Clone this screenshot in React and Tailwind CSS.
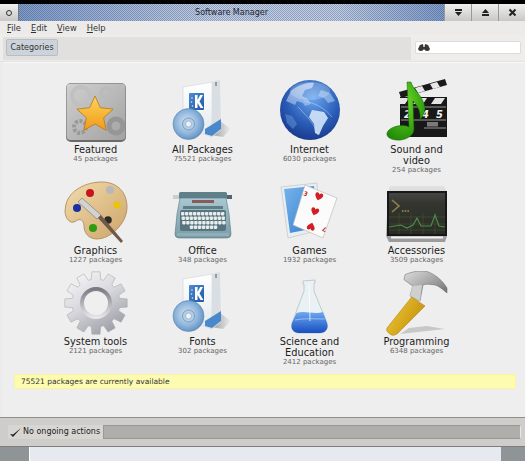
import React from "react";

function FeaturedIcon() {
  return (
    <svg width="64" height="64" viewBox="0 0 64 64">
      <defs>
        <linearGradient id="ftBg" x1="0" y1="0" x2="1" y2="1">
          <stop offset="0" stopColor="#d0d0d0" />
          <stop offset="1" stopColor="#a2a2a2" />
        </linearGradient>
        <linearGradient id="ftStar" x1="0" y1="0" x2="0" y2="1">
          <stop offset="0" stopColor="#fdd55a" />
          <stop offset="1" stopColor="#f09a1a" />
        </linearGradient>
      </defs>
      <rect x="2" y="4" width="60" height="59" rx="5" fill="#6a6a6a" />
      <rect x="2.5" y="4.5" width="59" height="56.5" rx="4" fill="url(#ftBg)" />
      <circle cx="17" cy="17" r="9" fill="none" stroke="#c0c0c0" strokeWidth="4" />
      <circle cx="16" cy="48" r="6" fill="none" stroke="#999999" strokeWidth="4" strokeDasharray="3 1.5" />
      <circle cx="52" cy="47" r="7" fill="none" stroke="#969696" strokeWidth="5" />
      <circle cx="42" cy="14" r="5" fill="none" stroke="#bababa" strokeWidth="3" />
      <path d="M31 17 L36.3 28.7 L49.1 30.1 L39.6 38.8 L42.2 51.4 L31 45 L19.8 51.4 L22.4 38.8 L12.9 30.1 L25.7 28.7 Z" fill="url(#ftStar)" stroke="#b8771a" strokeWidth="0.8" strokeLinejoin="round" />
    </svg>
  );
}

function BoxIcon({ id }) {
  return (
    <svg width="64" height="64" viewBox="0 0 64 64">
      <defs>
        <radialGradient id={id + "cd"} cx="0.45" cy="0.45" r="0.6">
          <stop offset="0" stopColor="#d7e6f4" />
          <stop offset="0.6" stopColor="#8fb6dc" />
          <stop offset="1" stopColor="#5c8cc0" />
        </radialGradient>
        <linearGradient id={id + "k"} x1="0" y1="0" x2="1" y2="1">
          <stop offset="0" stopColor="#4c8ad0" />
          <stop offset="1" stopColor="#1f5aa5" />
        </linearGradient>
        <linearGradient id={id + "s"} x1="0" y1="0" x2="1" y2="0">
          <stop offset="0" stopColor="#9a9a9a" />
          <stop offset="1" stopColor="#eeeeee" />
        </linearGradient>
        <linearGradient id={id + "f"} x1="0" y1="0" x2="0" y2="1">
          <stop offset="0" stopColor="#ffffff" />
          <stop offset="1" stopColor="#e4e9ed" />
        </linearGradient>
      </defs>
      <path d="M40 56 L49 42 L60 50 L52 58 Z" fill={`url(#${id}s)`} />
      <path d="M12 8 L41 3 L41 58 L12 47 Z" fill={`url(#${id}f)`} stroke="#cfd4d8" strokeWidth="0.6" />
      <path d="M41 3 L49 1 L50 51 L41 58 Z" fill="#d9dee2" />
      <rect x="44" y="3" width="2" height="4" fill="#9a9a9a" />
      <rect x="18" y="14" width="15" height="17" rx="1" fill={`url(#${id}k)`} />
      <path d="M24 16 L24 29 L26.5 29 L26.5 24 L29.5 29 L32.5 29 L28.5 22.5 L32 16 L29.2 16 L26.5 21 L26.5 16 Z" fill="#ffffff" />
      <circle cx="21" cy="19" r="0.8" fill="#dbe8f6" />
      <circle cx="20.5" cy="23" r="0.8" fill="#dbe8f6" />
      <circle cx="21.5" cy="27" r="0.8" fill="#dbe8f6" />
      <path d="M34 50 L50 40 L50 50 L41 57 L34 55 Z" fill="#4a88cc" />
      <circle cx="17.5" cy="45" r="15.5" fill={`url(#${id}cd)`} stroke="#5a86b5" strokeWidth="0.6" />
      <circle cx="17.5" cy="45" r="6" fill="#b7cfe6" stroke="#6a8fb5" strokeWidth="0.8" />
      <circle cx="17.5" cy="45" r="3" fill="#eef3f8" stroke="#7a9ac0" strokeWidth="0.6" />
    </svg>
  );
}

function GlobeIcon() {
  return (
    <svg width="64" height="64" viewBox="0 0 64 64">
      <defs>
        <radialGradient id="glSea" cx="0.55" cy="0.3" r="0.8">
          <stop offset="0" stopColor="#6aa6ee" />
          <stop offset="0.55" stopColor="#2a5cb6" />
          <stop offset="1" stopColor="#142f80" />
        </radialGradient>
        <linearGradient id="glLand" x1="0" y1="0" x2="0" y2="1">
          <stop offset="0" stopColor="#eef5fd" />
          <stop offset="1" stopColor="#a8c8f0" />
        </linearGradient>
      </defs>
      <circle cx="32" cy="31" r="30" fill="url(#glSea)" />
      <path d="M13 12 C20 6 30 3 36 4 L34 9 L27 11 L24 17 L30 20 L33 25 L27 27 L25 24 L19 22 L17 26 L8 22 Z" fill="url(#glLand)" opacity="0.6" />
      <path d="M34 31 L46 33 L50 39 L45 47 L41 56 L37 54 L36 45 L31 38 Z" fill="#d2e4f8" opacity="0.9" />
      <path d="M43 11 L52 14 L57 22 L50 24 L46 19 L40 17 Z" fill="#a8ccf2" opacity="0.6" />
      <path d="M7 35 L14 37 L19 45 L15 50 L9 44 Z" fill="#6ea0e0" opacity="0.45" />
      <path d="M20 28 C28 36 36 44 40 56 M26 22 C36 24 46 28 54 38" fill="none" stroke="#d8e8fa" strokeWidth="0.6" opacity="0.7" />
      <ellipse cx="32" cy="12" rx="20" ry="9" fill="#ffffff" opacity="0.2" />
    </svg>
  );
}

function SoundIcon() {
  return (
    <svg width="64" height="64" viewBox="0 0 64 64">
      <defs>
        <radialGradient id="snNote" cx="0.45" cy="0.35" r="0.7">
          <stop offset="0" stopColor="#6fdc2a" />
          <stop offset="1" stopColor="#1f8a05" />
        </radialGradient>
      </defs>
      <path d="M14 13 L60 0 L62 6 L16 19 Z" fill="#1a1a1a" />
      <path d="M30 9 L37 7 L40 12 L33 14 Z M45 5 L52 3 L55 8 L48 10 Z" fill="#e8e8e8" />
      <rect x="15" y="18" width="47" height="40" fill="#181818" />
      <path d="M15 19 L24 19 L20 25 L15 25 Z M32 19 L42 19 L38 25 L28 25 Z M50 19 L60 19 L56 25 L46 25 Z" fill="#e4e4e4" />
      <path d="M16 28 H61 M16 41 H61 M39 49 H61" stroke="#bbbbbb" strokeWidth="0.8" />
      <text x="19" y="39" fontFamily="'DejaVu Sans', sans-serif" fontSize="10" fontStyle="italic" fontWeight="700" fill="#f2f2f2">2</text>
      <text x="37" y="39" fontFamily="'DejaVu Sans', sans-serif" fontSize="10" fontStyle="italic" fontWeight="700" fill="#f2f2f2">4</text>
      <text x="51" y="39" fontFamily="'DejaVu Sans', sans-serif" fontSize="10" fontStyle="italic" fontWeight="700" fill="#f2f2f2">5</text>
      <rect x="42" y="43" width="11" height="4.5" fill="#7a7a7a" />
      <path d="M22 3 L26 3 C28 11 38 16 40 29 C40 34 37 38 35 41 C36 33 33 27 28 22 L29 50 C29 57 20 62 11 61 C3 60 0 56 3 52 C7 47 18 45 24 48 Z" fill="url(#snNote)" stroke="#14660a" strokeWidth="0.5" />
    </svg>
  );
}

function PaletteIcon() {
  return (
    <svg width="64" height="64" viewBox="0 0 64 64">
      <defs>
        <linearGradient id="paWood" x1="0" y1="0" x2="1" y2="1">
          <stop offset="0" stopColor="#f2dcae" />
          <stop offset="1" stopColor="#cda468" />
        </linearGradient>
      </defs>
      <path d="M2 24 C6 10 22 2 38 2 C53 2 63 12 63 27 C63 44 46 59 33 59 C24 59 20 52 20 46 C20 40 16 38 12 41 C6 45 1 38 1 31 Z" fill="url(#paWood)" stroke="#ab8450" strokeWidth="0.8" />
      <circle cx="26" cy="13" r="4" fill="#c8141c" />
      <circle cx="46" cy="10" r="4" fill="#b8b8b8" />
      <circle cx="53" cy="25" r="3.6" fill="#e8c40a" />
      <circle cx="13" cy="28" r="4" fill="#1c2fa8" />
      <circle cx="44" cy="40" r="3.8" fill="#2d2a25" />
      <circle cx="29" cy="48" r="4" fill="#2f9a12" />
      <path d="M14 22 L18 18 L37 35 L33 39 Z" fill="#d2d2d2" stroke="#77706a" strokeWidth="0.6" />
      <path d="M34 38 L37 35 L59 61 L57 63 Z" fill="#6e5a48" />
    </svg>
  );
}

function TypewriterIcon() {
  return (
    <svg width="64" height="64" viewBox="0 0 64 64">
      <defs>
        <linearGradient id="twBody" x1="0" y1="0" x2="0" y2="1">
          <stop offset="0" stopColor="#a9c8d0" />
          <stop offset="1" stopColor="#7a9ca6" />
        </linearGradient>
      </defs>
      <rect x="8" y="12" width="48" height="7" rx="1.5" fill="#5f808a" />
      <rect x="2" y="15" width="6" height="4" fill="#c9cfd1" />
      <rect x="56" y="15" width="5" height="4" fill="#50666e" />
      <path d="M9 18 L55 18 L58 34 L60 54 Q60 58 56 58 L8 58 Q4 58 4 54 L6 34 Z" fill="url(#twBody)" stroke="#567480" strokeWidth="0.6" />
      <rect x="21" y="20" width="22" height="3" fill="#8a5a5a" />
      <rect x="12" y="26" width="40" height="3" fill="#5d7d87" />
      <rect x="9" y="30" width="46" height="21" rx="2" fill="#587480" />
      {[32, 36.5, 41, 45.5].map((y, r) => (
        <g key={y}>
          {Array.from({ length: 11 - (r === 3 ? 4 : 0) }).map((_, i) => (
            <rect key={i} x={(r === 3 ? 17 : 10) + r * 0.6 + i * 4} y={y} width="3.4" height="3.4" rx="0.8" fill="#e8ecea" />
          ))}
        </g>
      ))}
      <rect x="6" y="53" width="52" height="3" fill="#8eaeb8" />
    </svg>
  );
}

function Heart({ x, y, flip }) {
  return (
    <path
      d="M0 -1.5 C1 -4 4 -3.5 4 -1 C4 1 1.5 3 0 4.5 C-1.5 3 -4 1 -4 -1 C-4 -3.5 -1 -4 0 -1.5 Z"
      fill="#d01f26"
      transform={`translate(${x} ${y}) rotate(${flip ? 196 : 16})`}
    />
  );
}

function CardsIcon() {
  return (
    <svg width="64" height="64" viewBox="0 0 64 64">
      <defs>
        <linearGradient id="caBlue" x1="0" y1="0" x2="1" y2="1">
          <stop offset="0" stopColor="#7ab4ea" />
          <stop offset="1" stopColor="#2f7dd0" />
        </linearGradient>
      </defs>
      <path d="M3 7 L39 3 L42 50 L10 58 Z" fill="#e9eef2" stroke="#b9c0c6" strokeWidth="0.6" />
      <path d="M6 9 L36 6 L38 48 L12 53 Z" fill="url(#caBlue)" />
      <path d="M27 5 L59 18 L45 58 L15 45 Z" fill="#fbfbfb" stroke="#b5b5b5" strokeWidth="0.6" />
      <text x="0" y="0" fontFamily="'DejaVu Sans', sans-serif" fontSize="6" fontWeight="700" fill="#c2292e" transform="translate(25 15) rotate(20)">3</text>
      <text x="0" y="0" fontFamily="'DejaVu Sans', sans-serif" fontSize="6" fontWeight="700" fill="#c2292e" transform="translate(49 48) rotate(200)">7</text>
      <Heart x={41} y={16} />
      <Heart x={37} y={31} />
      <Heart x={33} y={47} flip />
    </svg>
  );
}

function MonitorIcon() {
  return (
    <svg width="64" height="64" viewBox="0 0 64 64">
      <defs>
        <linearGradient id="moEdge" x1="0" y1="0" x2="0" y2="1">
          <stop offset="0" stopColor="#e2e2e2" />
          <stop offset="1" stopColor="#9a9a9a" />
        </linearGradient>
        <linearGradient id="moScreen" x1="0" y1="0" x2="0" y2="1">
          <stop offset="0" stopColor="#454545" />
          <stop offset="0.25" stopColor="#34362f" />
          <stop offset="1" stopColor="#272d25" />
        </linearGradient>
      </defs>
      <path d="M3 12 L5 6 L59 6 L62 12 L62 56 L60 62 L4 62 L1 56 Z" fill="url(#moEdge)" />
      <rect x="2" y="11" width="60" height="45" fill="#181818" />
      <rect x="4" y="13" width="56" height="41" fill="url(#moScreen)" />
      <path d="M7 20 L14 26 L7 32" fill="none" stroke="#8f8350" strokeWidth="1.6" />
      <path d="M17 31 H24" stroke="#a59552" strokeWidth="1.4" strokeDasharray="1.5 1.2" />
      <path d="M4 37 H60 M4 44 H60 M4 50 H60 M14 33 V54 M26 33 V54 M38 33 V54 M50 33 V54" stroke="#5e5a3a" strokeWidth="0.4" />
      <path d="M4 47 L16 45 L22 48 L28 45 L32 38 L36 46 L42 46 L46 46 L50 35 L54 46 L60 47" fill="none" stroke="#4e8a4a" strokeWidth="1.2" />
      <rect x="6" y="56.5" width="52" height="2" fill="#f2f2f2" />
    </svg>
  );
}

function GearIcon() {
  // teeth are worked out once, 12 around the ring
  const pts = [];
  for (let i = 0; i < 12; i++) {
    const a = (i / 12) * Math.PI * 2;
    const w = 0.13;
    [
      [a - w * 1.5, 24],
      [a - w, 31.5],
      [a + w, 31.5],
      [a + w * 1.5, 24],
    ].forEach(([t, r]) => pts.push((32 + Math.sin(t) * r).toFixed(1) + "," + (32 - Math.cos(t) * r).toFixed(1)));
  }
  return (
    <svg width="64" height="64" viewBox="0 0 64 64">
      <defs>
        <linearGradient id="geBody" x1="0" y1="0" x2="0.6" y2="1">
          <stop offset="0" stopColor="#fbfbfc" />
          <stop offset="0.55" stopColor="#d6d6dc" />
          <stop offset="1" stopColor="#a2a2ab" />
        </linearGradient>
        <linearGradient id="geIn" x1="0" y1="0" x2="0" y2="1">
          <stop offset="0" stopColor="#74747e" />
          <stop offset="1" stopColor="#ececf0" />
        </linearGradient>
      </defs>
      <polygon points={pts.join(" ")} fill="url(#geBody)" stroke="#a0a0a8" strokeWidth="0.5" strokeLinejoin="round" />
      <circle cx="32" cy="32" r="16" fill="url(#geIn)" />
      <circle cx="32" cy="32" r="12" fill="#efefef" />
    </svg>
  );
}

function FlaskIcon() {
  return (
    <svg width="64" height="64" viewBox="0 0 64 64">
      <defs>
        <linearGradient id="flLiq" x1="0" y1="0" x2="0" y2="1">
          <stop offset="0" stopColor="#6ea8f2" />
          <stop offset="1" stopColor="#174fc0" />
        </linearGradient>
      </defs>
      <path d="M25 10 L37 9 L37 12 L36 12 L36 20 L49 52 C51 58 47 62 42 62 L21 62 C16 62 12 58 14 52 L26 20 L26 13 L25 13 Z" fill="#eaf1f4" stroke="#a9bac2" strokeWidth="0.7" />
      <path d="M18.5 42 C27 39 36 44 45 41 L49 52 C51 58 47 62 42 62 L21 62 C16 62 12 58 14 52 Z" fill="url(#flLiq)" />
      <path d="M31 14 L32 50" stroke="#ffffff" strokeWidth="1" opacity="0.8" />
      <path d="M17 49 C26 47 38 48 47 48" stroke="#a8ccf6" strokeWidth="0.8" fill="none" />
    </svg>
  );
}

function HammerIcon() {
  return (
    <svg width="64" height="66" viewBox="0 0 64 66" className="-mb-[2px]">
      <defs>
        <linearGradient id="haGrip" x1="0" y1="0" x2="1" y2="0.6">
          <stop offset="0" stopColor="#f2ce3a" />
          <stop offset="1" stopColor="#c48f0c" />
        </linearGradient>
        <linearGradient id="haHead" x1="0" y1="0" x2="1" y2="1">
          <stop offset="0" stopColor="#dddddd" />
          <stop offset="0.6" stopColor="#969696" />
          <stop offset="1" stopColor="#5a5a5a" />
        </linearGradient>
      </defs>
      <path d="M15 63 L60 58 L42 55 L24 57 Z" fill="#aaaaaa" opacity="0.55" />
      <path d="M20 3.7 C28 0 36 -0.5 42 0.5 C50 3 58 10 62 17 L62 22 C57 18 53 14 48 13.7 C44 13 40 13 38 14 L35 30 L25 25 L27.7 15 L19 8.7 Z" fill="url(#haHead)" stroke="#666666" strokeWidth="0.5" />
      <path d="M27.5 15 L37 14 L35 30 L25 25 Z" fill="#cfcfcf" />
      <path d="M26.7 26 L40 35 L15 60 C11 65 7 65 5 63 C2 61 1 59 2 57 Z" fill="url(#haGrip)" stroke="#a07608" strokeWidth="0.5" />
    </svg>
  );
}

const categories = [
  { icon: <FeaturedIcon />, name: "Featured", count: "45 packages" },
  { icon: <BoxIcon id="boxA" />, name: "All Packages", count: "75521 packages" },
  { icon: <GlobeIcon />, name: "Internet", count: "6030 packages" },
  { icon: <SoundIcon />, name: ["Sound and", "video"], count: "254 packages" },
  { icon: <PaletteIcon />, name: "Graphics", count: "1227 packages" },
  { icon: <TypewriterIcon />, name: "Office", count: "348 packages" },
  { icon: <CardsIcon />, name: "Games", count: "1932 packages" },
  { icon: <MonitorIcon />, name: "Accessories", count: "3509 packages" },
  { icon: <GearIcon />, name: "System tools", count: "2121 packages" },
  { icon: <BoxIcon id="boxB" />, name: "Fonts", count: "302 packages" },
  { icon: <FlaskIcon />, name: ["Science and", "Education"], count: "2412 packages" },
  { icon: <HammerIcon />, name: "Programming", count: "6348 packages" },
];

function Category({ icon, name, count }) {
  const lines = Array.isArray(name) ? name : [name];
  return (
    <div className="flex flex-col items-center">
      {icon}
      <div className="mt-[1px] text-center text-[9.8px] leading-[11px] text-[#1c1c1c] whitespace-nowrap">
        {lines.map((l) => (
          <div key={l}>{l}</div>
        ))}
      </div>
      <div className="text-[7px] leading-[9px] text-[#666] whitespace-nowrap">{count}</div>
    </div>
  );
}

function WinButton({ children }) {
  return (
    <div className="w-[27px] h-[17px] flex items-center justify-center bg-gradient-to-b from-[#f0f0ee] to-[#c8c8c6] border-l border-[#999]">
      {children}
    </div>
  );
}

export default function App() {
  return (
    <div className="w-[525px] h-[461px] overflow-hidden flex flex-col bg-[#ececec] font-['DejaVu_Sans',sans-serif]">
      <div className="h-[4px] bg-black shrink-0" />

      <div className="h-[17px] shrink-0 flex items-stretch bg-[#8da2c4]">
        <div className="w-[19px] flex items-center justify-center bg-gradient-to-b from-[#f0f0ee] to-[#c8c8c6] border-r border-[#777]">
          <div className="w-[6px] h-[6px] rounded-full border border-[#333]" />
        </div>
        <div className="flex-1 flex items-center justify-center text-[8px] text-[#1d2533] bg-[linear-gradient(90deg,#3f66a866,#ffffff33_45%,#ffffff33_75%,#3f66a866),repeating-conic-gradient(#7288b0_0_25%,#b4c2d8_0_50%)] [background-size:100%_100%,2px_2px]">
          Software Manager
        </div>
        <WinButton>
          <svg width="9" height="9" viewBox="0 0 9 9"><path d="M1 1 H8 V3 H1 Z M1 4 H8 L4.5 8 Z" fill="#222" /></svg>
        </WinButton>
        <WinButton>
          <svg width="9" height="9" viewBox="0 0 9 9"><path d="M4.5 1 L8 5 H1 Z M1 6 H8 V8 H1 Z" fill="#222" /></svg>
        </WinButton>
        <WinButton>
          <svg width="9" height="9" viewBox="0 0 9 9"><path d="M1.5 1.5 L7.5 7.5 M7.5 1.5 L1.5 7.5" stroke="#222" strokeWidth="2" /></svg>
        </WinButton>
      </div>

      <div className="h-[14px] shrink-0 flex items-center gap-[10px] pl-[7px] text-[8.3px] text-[#333] bg-[#ecebe9]">
        <span><span className="underline">F</span>ile</span>
        <span><span className="underline">E</span>dit</span>
        <span><span className="underline">V</span>iew</span>
        <span><span className="underline">H</span>elp</span>
      </div>

      <div className="h-[26px] shrink-0 flex items-end pb-[1px] bg-[#eeedeb] pl-[3px] pr-[4px]">
        <div className="w-[408px] h-[23px] flex items-center pb-[2px] pl-[3px] bg-[#e1e0de]">
          <div className="w-[52px] h-[17px] flex items-center justify-center rounded-[2px] border border-[#b8bdc2] bg-[#cdd3da] text-[8px] text-[#333]">
            Categories
          </div>
        </div>
        <div className="ml-auto mb-[6px] w-[106px] h-[13px] flex items-center pl-[2px] rounded-[2px] bg-white border border-[#dcdcdc]">
          <svg width="12" height="9" viewBox="0 0 12 9">
            <path d="M2 2 L5 1 L5.5 4 L6.5 4 L7 1 L10 2 L12 6 A3 3 0 0 1 6.5 6.5 L5.5 6.5 A3 3 0 0 1 0 6 Z" fill="#3b3630" />
          </svg>
        </div>
      </div>

      <div className="h-[1px] shrink-0 bg-[#e2e2e0]" />

      <div className="flex-1 ml-[3px] bg-[#eeeeee] pt-[16px] flex flex-col border-t border-[#f8f8f8]">
        <div className="grid grid-cols-[107px_107px_107px_107px] grid-rows-[101px_91px_103px] ml-[39px]">
          {categories.map((c, i) => (
            <Category key={i} {...c} />
          ))}
        </div>
        <div className="ml-[11px] mr-[9px] h-[15px] pl-[6px] flex items-center text-[7.5px] text-[#333] bg-[#fdfbb0] border border-[#f7f3a8]">
          75521 packages are currently available
        </div>
      </div>

      <div className="h-[30px] shrink-0 flex flex-col justify-center border-t border-[#8e8e8c] border-b border-b-[#7d7d7b] bg-[#cfcdc9] pl-[8px] pr-[4px]">
        <div className="flex items-stretch h-[14px] rounded-[2px] bg-[#d8d6d2]">
          <div className="w-[95px] flex items-center gap-[1px] pl-[1px] text-[8px] text-[#222]">
            <svg width="13" height="11" viewBox="0 0 13 11"><path d="M1 7 L4 10 L12 1 L4 7.5 Z" fill="#222" /></svg>
            <span className="whitespace-nowrap">No ongoing actions</span>
          </div>
          <div className="flex-1 bg-[#b0aeaa] border border-[#9a9895] border-r-[#e8e6e2]" />
        </div>
      </div>

      <div className="h-[14px] shrink-0 flex">
        <div className="w-[29px] bg-[#8f9496]" />
        <div className="flex-1 bg-[#e6eaf0] border-l border-white" />
        <div className="w-[24px] bg-[#8f9496]" />
      </div>
    </div>
  );
}
